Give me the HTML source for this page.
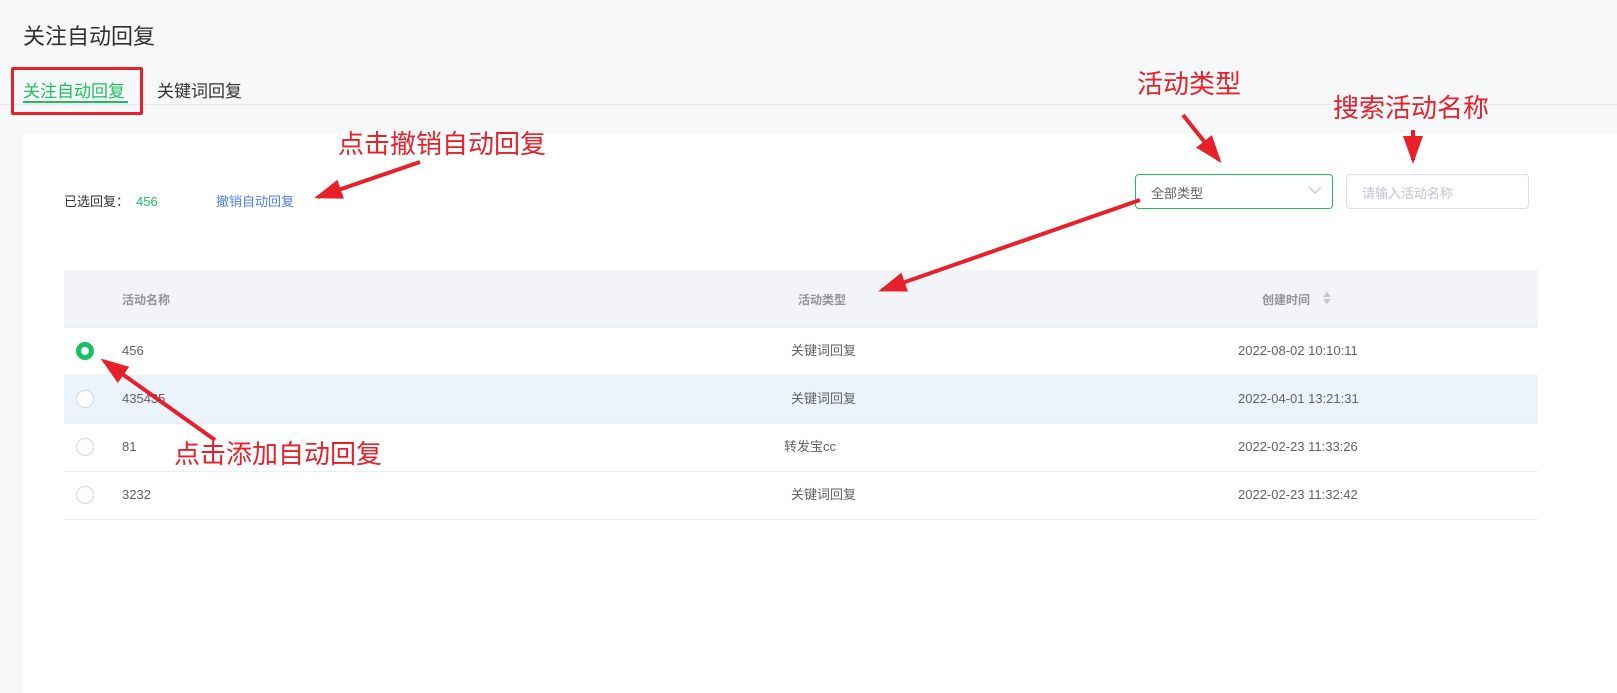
<!DOCTYPE html>
<html><head><meta charset="utf-8"><style>
*{margin:0;padding:0;box-sizing:border-box}
body{width:1617px;height:690px;background:#f7f8fa;font-family:"Liberation Sans","Noto Sans CJK SC",sans-serif;position:relative;overflow:hidden;color:#333}
.abs{position:absolute;white-space:nowrap}
.card{position:absolute;left:23px;top:133px;width:1594px;height:560px;background:#fff}
.row{position:absolute;left:64px;width:1474px;height:48px;border-bottom:1px solid #ebeef5;font-size:13px;color:#606266}
.row span{position:absolute;top:0;line-height:46px;height:47px}
.radio{position:absolute;left:12px;top:14px;width:18px;height:18px;border-radius:50%;border:1.5px solid #d4d7dd;background:#fff}
.red{color:#e8202a;font-size:26px}
</style></head><body>
<div class="abs" style="left:23px;top:19px;font-size:22px;color:#303133">关注自动回复</div>
<div class="abs" style="left:0;top:104px;width:1617px;height:1px;background:#e4e7ed"></div>
<div class="abs" style="left:11px;top:67px;width:132px;height:48px;border:3px solid #e8202a;border-radius:2px"></div>
<div class="abs" style="left:23px;top:77px;font-size:17px;color:#1fbf5f">关注自动回复</div>
<div class="abs" style="left:23px;top:101px;width:105px;height:2px;background:#1fbf5f"></div>
<div class="abs" style="left:157px;top:77px;font-size:17px;color:#303133">关键词回复</div>
<div class="card"></div>
<div class="abs" style="left:64px;top:194px;font-size:13px;line-height:16px;color:#303133">已选回复：</div>
<div class="abs" style="left:136px;top:194px;font-size:13px;line-height:16px;color:#1fbf5f">456</div>
<div class="abs" style="left:216px;top:194px;font-size:13px;line-height:16px;color:#4e7bf0">撤销自动回复</div>
<div class="abs" style="left:1135px;top:174px;width:198px;height:35px;border:1px solid #1fbf5f;border-radius:4px"></div>
<div class="abs" style="left:1151px;top:183px;font-size:13px;color:#606266">全部类型</div>
<svg class="abs" style="left:1308px;top:185px" width="14" height="10"><path d="M1 2 L7 8 L13 2" fill="none" stroke="#c0c4cc" stroke-width="1.2"/></svg>
<div class="abs" style="left:1346px;top:174px;width:183px;height:35px;border:1px solid #dcdfe6;border-radius:4px"></div>
<div class="abs" style="left:1362px;top:183px;font-size:13px;color:#c0c4cc">请输入活动名称</div>
<div class="abs" style="left:64px;top:270px;width:1474px;height:58px;background:#f3f4f7;border-bottom:1px solid #ebeef5"></div>
<div class="abs" style="left:122px;top:291px;font-size:12px;color:#909399;font-weight:bold">活动名称</div>
<div class="abs" style="left:798px;top:291px;font-size:12px;color:#909399;font-weight:bold">活动类型</div>
<div class="abs" style="left:1262px;top:291px;font-size:12px;color:#909399;font-weight:bold">创建时间</div>
<svg class="abs" style="left:1322px;top:291px" width="10" height="14"><path d="M1 6 L5 1 L9 6Z M1 8 L5 13 L9 8Z" fill="#c0c4cc"/></svg>
<div class="row" style="top:328px"><div class="radio" style="border:5px solid #17c060"></div><span style="left:58px">456</span><span style="left:727px">关键词回复</span><span style="left:1174px">2022-08-02 10:10:11</span></div>
<div class="row" style="top:376px;background:#ebf3fd"><div class="radio"></div><span style="left:58px">435435</span><span style="left:727px">关键词回复</span><span style="left:1174px">2022-04-01 13:21:31</span></div>
<div class="row" style="top:424px"><div class="radio"></div><span style="left:58px">81</span><span style="left:720px">转发宝cc</span><span style="left:1174px">2022-02-23 11:33:26</span></div>
<div class="row" style="top:472px"><div class="radio"></div><span style="left:58px">3232</span><span style="left:727px">关键词回复</span><span style="left:1174px">2022-02-23 11:32:42</span></div>
<div class="abs red" style="left:1137px;top:64px">活动类型</div>
<div class="abs red" style="left:1333px;top:88px">搜索活动名称</div>
<div class="abs red" style="left:338px;top:124px">点击撤销自动回复</div>
<div class="abs red" style="left:174px;top:434px">点击添加自动回复</div>
<svg class="abs" style="left:0;top:0" width="1617" height="690">
<defs><marker id="h" markerWidth="7" markerHeight="5" refX="6" refY="2.5" orient="auto"><path d="M0 0 L7 2.5 L0 5Z" fill="#e8202a"/></marker></defs>
<g stroke="#e8202a" stroke-width="4" fill="none" marker-end="url(#h)">
<line x1="420" y1="162" x2="318" y2="197"/>
<line x1="1183" y1="115" x2="1219" y2="160"/>
<line x1="1413" y1="130" x2="1413" y2="160"/>
<line x1="1140" y1="200" x2="882" y2="290"/>
<line x1="215" y1="440" x2="104" y2="361"/>
</g></svg>
</body></html>
